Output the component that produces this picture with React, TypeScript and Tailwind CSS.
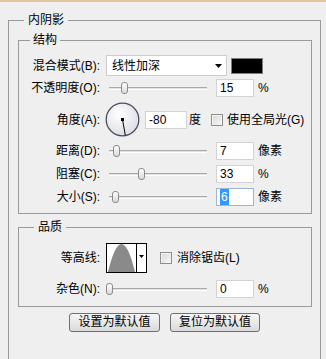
import React from "react";

const font = "font-['Liberation_Sans','Noto_Sans_CJK_SC',sans-serif]";

type SliderProps = { thumb: string };

const Slider = ({ thumb }: SliderProps) => {
  return (
    <div className="relative ml-[6px] h-[18px] w-[104px] shrink-0">
      <div className="absolute left-[3px] right-[3px] top-[8px] h-[3px] border-t border-b border-t-[#a9a9a9] border-b-white bg-[#e2e2e2]" />
      <div
        className={`absolute top-[3px] h-[12px] w-[7px] rounded-[3px] border border-[#8c8c8c] bg-gradient-to-b from-white to-[#d9d9d9] ${thumb}`}
      />
    </div>
  );
};

const Field = ({ value, focused }: { value: string; focused?: boolean }) => {
  return (
    <div
      className={`ml-[6px] flex h-[18px] w-[38px] shrink-0 items-center border bg-white pl-[3px] ${
        focused ? "border-[#9db6d8]" : "border-[#d3d3d3]"
      }`}
    >
      {focused ? <span className="bg-[#3399ff] px-[1px] text-white">{value}</span> : value}
    </div>
  );
};

const Check = ({ className }: { className: string }) => {
  return (
    <div
      className={`h-[12px] w-[12px] shrink-0 border border-[#8e8f8f] bg-gradient-to-br from-[#d6d6d6] to-[#fafafa] shadow-[inset_1px_1px_0_#f4f4f4] ${className}`}
    />
  );
};

const Label = ({ text }: { text: string }) => (
  <div className="w-[81px] shrink-0 text-right">{text}</div>
);

const Dial = () => (
  <svg width="35" height="35" viewBox="0 0 35 35" className="ml-[5px] shrink-0">
    <defs>
      <radialGradient id="dialFill" cx="40%" cy="35%" r="70%">
        <stop offset="0%" stopColor="#ffffff" />
        <stop offset="100%" stopColor="#dcdde4" />
      </radialGradient>
    </defs>
    <circle cx="17.5" cy="17.5" r="16.3" fill="url(#dialFill)" stroke="#4b4f63" strokeWidth="1.3" />
    <line x1="17.5" y1="17.5" x2="20.3" y2="33.2" stroke="#000" strokeWidth="1" />
    <rect x="16" y="16" width="3" height="3" fill="#000" />
  </svg>
);

const App = () => {
  return (
    <div
      className={`h-[359px] w-[326px] overflow-hidden border-t-2 border-[#e5c49c] bg-[#efefef] text-[12px] leading-[16px] text-black ${font}`}
    >
      <fieldset className="ml-[8px] mt-[10px] w-[313px] border border-[#9a9a9a] px-0 pb-[60px]">
        <legend className="ml-[15px] px-[4px]">内阴影</legend>

        <fieldset className="ml-[9px] mt-[4px] w-[294px] border border-[#9a9a9a] px-0 pb-[7px]">
          <legend className="ml-[11px] px-[3px]">结构</legend>

          <div className="mt-[7px] flex h-[21px] items-center">
            <Label text="混合模式(B):" />
            <div className="ml-[6px] flex h-[21px] w-[121px] items-center justify-between border border-[#cdcdcd] bg-white pl-[5px] pr-[4px]">
              <span>线性加深</span>
              <svg width="7" height="4" viewBox="0 0 7 4">
                <path d="M0 0 H7 L3.5 4 Z" fill="#000" />
              </svg>
            </div>
            <div className="ml-[4px] h-[16px] w-[32px] border border-[#7d7d7d] bg-black" />
          </div>

          <div className="mt-[3px] flex h-[18px] items-center">
            <Label text="不透明度(O):" />
            <Slider thumb="left-[15px]" />
            <Field value="15" />
            <span className="ml-[4px]">%</span>
          </div>

          <div className="mt-[5px] flex h-[35px] items-center">
            <Label text="角度(A):" />
            <Dial />
            <div className="ml-[5px] flex h-[18px] w-[42px] items-center border border-[#d3d3d3] bg-white pl-[3px]">
              -80
            </div>
            <span className="ml-[2px]">度</span>
            <Check className="ml-[10px]" />
            <span className="ml-[4px]">使用全局光(G)</span>
          </div>

          <div className="mt-[5px] flex h-[18px] items-center">
            <Label text="距离(D):" />
            <Slider thumb="left-[7px]" />
            <Field value="7" />
            <span className="ml-[4px]">像素</span>
          </div>

          <div className="mt-[5px] flex h-[18px] items-center">
            <Label text="阻塞(C):" />
            <Slider thumb="left-[32px]" />
            <Field value="33" />
            <span className="ml-[4px]">%</span>
          </div>

          <div className="mt-[5px] flex h-[18px] items-center">
            <Label text="大小(S):" />
            <Slider thumb="left-[6px]" />
            <Field value="6" focused />
            <span className="ml-[4px]">像素</span>
          </div>
        </fieldset>

        <fieldset className="ml-[9px] mt-[5px] w-[294px] border border-[#9a9a9a] px-0 pb-[8px]">
          <legend className="ml-[15px] px-[4px]">品质</legend>

          <div className="mt-[8px] flex h-[30px] items-center">
            <Label text="等高线:" />
            <div className="ml-[6px] flex h-[30px] w-[41px] border border-black bg-white">
              <svg width="29" height="28" viewBox="0 0 29 28">
                <path d="M1 28 Q14.5 -28 28 28 Z" fill="#8a8a8a" />
              </svg>
              <div className="flex flex-1 items-center justify-center border-l border-black pb-[4px]">
                <svg width="5" height="3" viewBox="0 0 5 3">
                  <path d="M0 0 H5 L2.5 3 Z" fill="#000" />
                </svg>
              </div>
            </div>
            <Check className="ml-[13px]" />
            <span className="ml-[5px]">消除锯齿(L)</span>
          </div>

          <div className="mt-[7px] flex h-[18px] items-center">
            <Label text="杂色(N):" />
            <Slider thumb="left-[0px]" />
            <Field value="0" />
            <span className="ml-[4px]">%</span>
          </div>
        </fieldset>

        <div className="mt-[6px] flex justify-center gap-[10px]">
          <button className="h-[19px] w-[91px] rounded-[3px] border border-[#707070] bg-gradient-to-b from-[#f7f7f7] to-[#dadada] leading-[17px]">
            设置为默认值
          </button>
          <button className="h-[19px] w-[90px] rounded-[3px] border border-[#707070] bg-gradient-to-b from-[#f7f7f7] to-[#dadada] leading-[17px]">
            复位为默认值
          </button>
        </div>
      </fieldset>
    </div>
  );
};

export default App;
